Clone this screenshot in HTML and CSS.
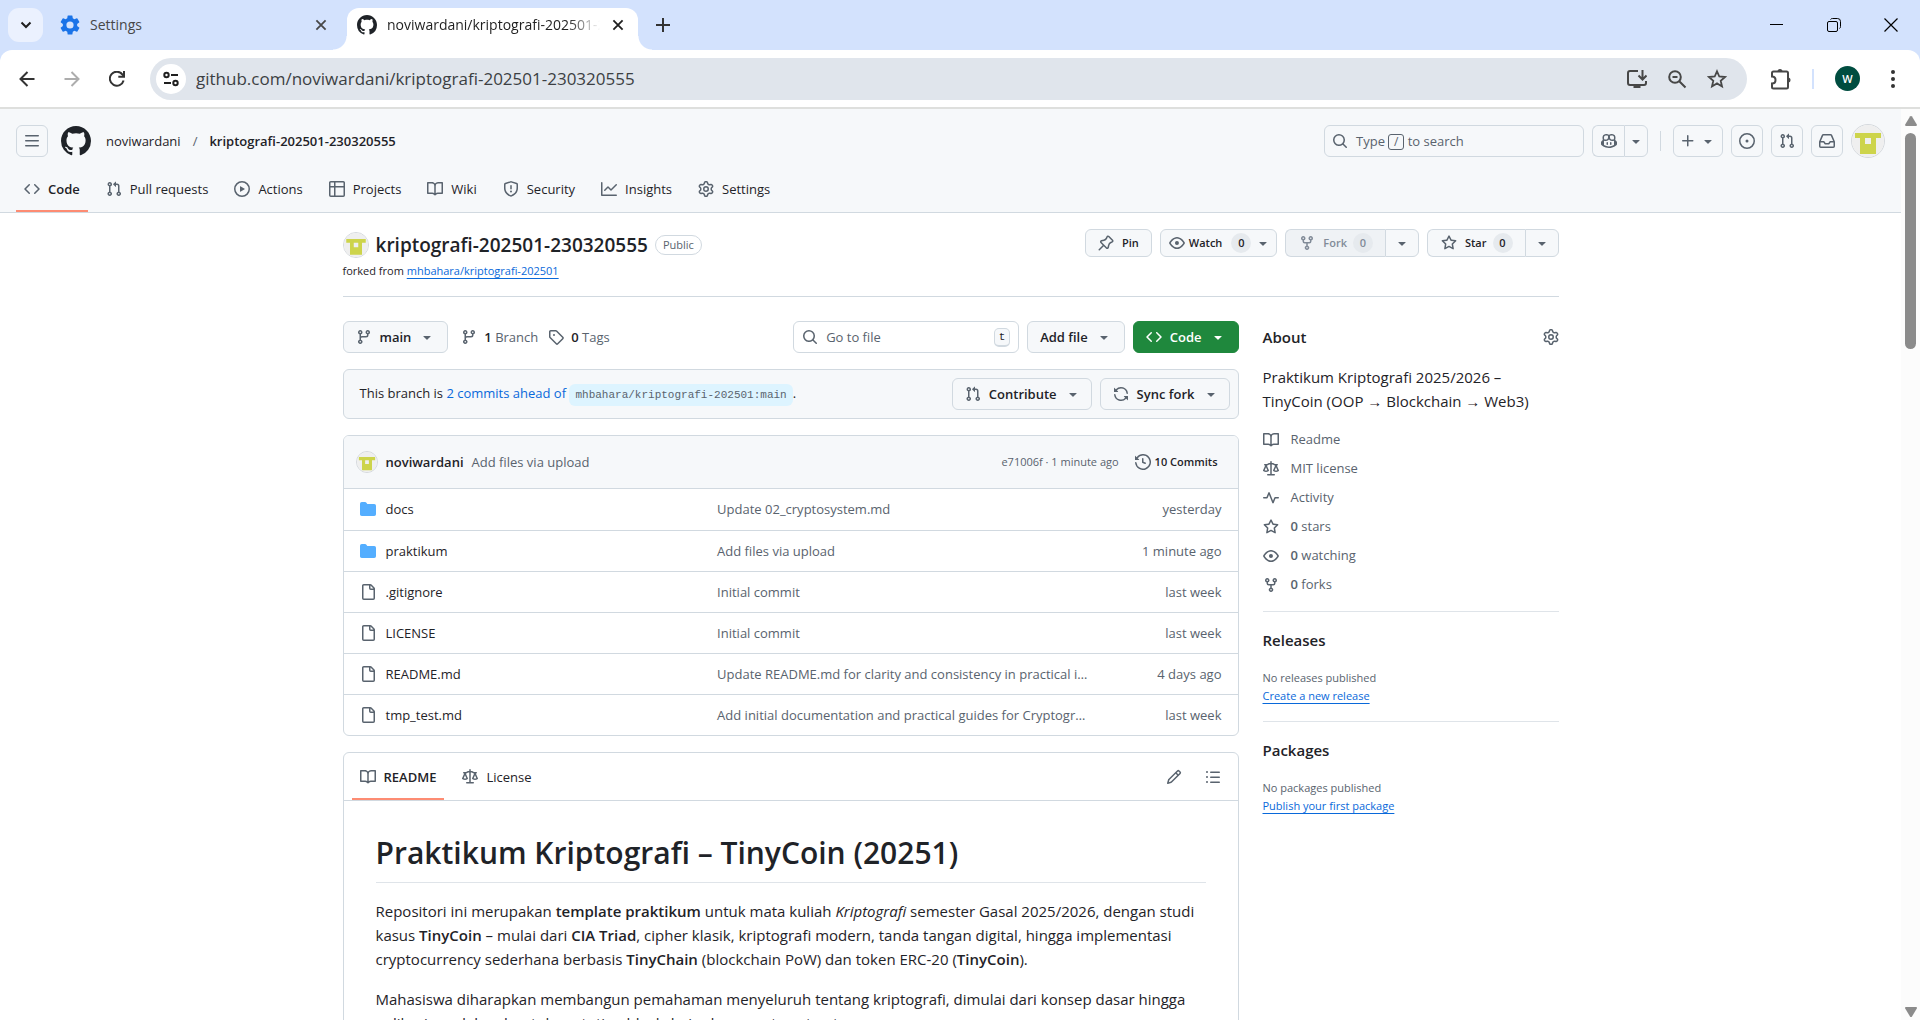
FILE: index.html
```html
<!DOCTYPE html>
<html lang="en">
<head>
<meta charset="utf-8">
<meta name="viewport" content="width=device-width, initial-scale=1">
<title>noviwardani/kriptografi-202501-230320555</title>
<link rel="stylesheet" href="styles.css">
</head>
<body>
<svg class="sprite" aria-hidden="true">
  <symbol id="three-bars" viewBox="0 0 16 16"><path d="M1 2.75A.75.75 0 0 1 1.75 2h12.5a.75.75 0 0 1 0 1.5H1.75A.75.75 0 0 1 1 2.75Zm0 5A.75.75 0 0 1 1.75 7h12.5a.75.75 0 0 1 0 1.5H1.75A.75.75 0 0 1 1 7.75ZM1.75 12h12.5a.75.75 0 0 1 0 1.5H1.75a.75.75 0 0 1 0-1.5Z"/></symbol>
  <symbol id="mark" viewBox="0 0 16 16"><path d="M8 0c4.42 0 8 3.58 8 8a8.013 8.013 0 0 1-5.45 7.59c-.4.08-.55-.17-.55-.38 0-.27.01-1.13.01-2.2 0-.75-.25-1.23-.54-1.48 1.78-.2 3.65-.88 3.65-3.95 0-.88-.31-1.59-.82-2.15.08-.2.36-1.02-.08-2.12 0 0-.67-.22-2.2.82-.64-.18-1.32-.27-2-.27-.68 0-1.36.09-2 .27-1.53-1.03-2.2-.82-2.2-.82-.44 1.1-.16 1.92-.08 2.12-.51.56-.82 1.28-.82 2.15 0 3.06 1.86 3.75 3.64 3.95-.23.2-.44.55-.51 1.07-.46.21-1.61.55-2.33-.66-.15-.24-.6-.83-1.23-.82-.67.01-.27.38.01.53.34.19.73.9.82 1.13.16.45.68 1.31 2.69.94 0 .67.01 1.3.01 1.49 0 .21-.15.45-.55.38A7.995 7.995 0 0 1 0 8c0-4.42 3.58-8 8-8Z"/></symbol>
  <symbol id="code" viewBox="0 0 16 16"><path d="m11.28 3.22 4.25 4.25a.75.75 0 0 1 0 1.06l-4.25 4.25a.749.749 0 0 1-1.275-.326.749.749 0 0 1 .215-.734L13.94 8l-3.72-3.72a.749.749 0 0 1 .326-1.275.749.749 0 0 1 .734.215Zm-6.56 0a.751.751 0 0 1 1.042.018.751.751 0 0 1 .018 1.042L2.06 8l3.72 3.72a.749.749 0 0 1-.326 1.275.749.749 0 0 1-.734-.215L.47 8.53a.75.75 0 0 1 0-1.06Z"/></symbol>
  <symbol id="pull" viewBox="0 0 16 16"><path d="M1.5 3.25a2.25 2.25 0 1 1 3 2.122v5.256a2.251 2.251 0 1 1-1.5 0V5.372A2.25 2.25 0 0 1 1.5 3.25Zm5.677-.177L9.573.677A.25.25 0 0 1 10 .854V2.5h1A2.5 2.5 0 0 1 13.5 5v5.628a2.251 2.251 0 1 1-1.5 0V5a1 1 0 0 0-1-1h-1v1.646a.25.25 0 0 1-.427.177L7.177 3.427a.25.25 0 0 1 0-.354ZM3.75 2.5a.75.75 0 1 0 0 1.5.75.75 0 0 0 0-1.5Zm0 9.5a.75.75 0 1 0 0 1.5.75.75 0 0 0 0-1.5Zm8.25.75a.75.75 0 1 0 1.5 0 .75.75 0 0 0-1.5 0Z"/></symbol>
  <symbol id="play" viewBox="0 0 16 16"><path d="M8 0a8 8 0 1 1 0 16A8 8 0 0 1 8 0ZM1.5 8a6.5 6.5 0 1 0 13 0 6.5 6.5 0 0 0-13 0Zm4.879-2.773 4.264 2.559a.25.25 0 0 1 0 .428l-4.264 2.559A.25.25 0 0 1 6 10.559V5.442a.25.25 0 0 1 .379-.215Z"/></symbol>
  <symbol id="table" viewBox="0 0 16 16"><path d="M0 1.75C0 .784.784 0 1.75 0h12.5C15.216 0 16 .784 16 1.75v12.5A1.75 1.75 0 0 1 14.25 16H1.75A1.75 1.75 0 0 1 0 14.25ZM6.5 6.5v8h7.75a.25.25 0 0 0 .25-.25V6.5Zm8-1.5V1.75a.25.25 0 0 0-.25-.25H6.5V5Zm-13 1.5v7.75c0 .138.112.25.25.25H5v-8ZM5 5V1.5H1.75a.25.25 0 0 0-.25.25V5Z"/></symbol>
  <symbol id="book" viewBox="0 0 16 16"><path d="M0 1.75A.75.75 0 0 1 .75 1h4.253c1.227 0 2.317.59 3 1.501A3.743 3.743 0 0 1 11.006 1h4.245a.75.75 0 0 1 .75.75v10.5a.75.75 0 0 1-.75.75h-4.507a2.25 2.25 0 0 0-1.591.659l-.622.621a.75.75 0 0 1-1.06 0l-.622-.621A2.25 2.25 0 0 0 5.258 13H.75a.75.75 0 0 1-.75-.75Zm7.251 10.324.004-5.073-.002-2.253A2.25 2.25 0 0 0 5.003 2.5H1.5v9h3.757a3.75 3.75 0 0 1 1.994.574ZM8.755 4.75l-.004 7.322a3.752 3.752 0 0 1 1.992-.572H14.5v-9h-3.495a2.25 2.25 0 0 0-2.25 2.25Z"/></symbol>
  <symbol id="shield" viewBox="0 0 16 16"><path d="M7.467.133a1.748 1.748 0 0 1 1.066 0l5.25 1.68A1.75 1.75 0 0 1 15 3.48V7c0 1.566-.32 3.182-1.303 4.682-.983 1.498-2.585 2.813-5.032 3.855a1.697 1.697 0 0 1-1.33 0c-2.447-1.042-4.049-2.357-5.032-3.855C1.32 10.182 1 8.566 1 7V3.48a1.75 1.75 0 0 1 1.217-1.667Zm.61 1.429a.25.25 0 0 0-.153 0l-5.25 1.68a.25.25 0 0 0-.174.238V7c0 1.358.275 2.666 1.057 3.86.784 1.194 2.121 2.34 4.366 3.297a.196.196 0 0 0 .154 0c2.245-.956 3.582-2.104 4.366-3.298C13.225 9.666 13.5 8.36 13.5 7V3.48a.251.251 0 0 0-.174-.237l-5.25-1.68ZM8.75 4.75v3a.75.75 0 0 1-1.5 0v-3a.75.75 0 0 1 1.5 0ZM9 10.5a1 1 0 1 1-2 0 1 1 0 0 1 2 0Z"/></symbol>
  <symbol id="graph" viewBox="0 0 16 16"><path d="M1.5 1.75V13.5h13.75a.75.75 0 0 1 0 1.5H.75a.75.75 0 0 1-.75-.75V1.75a.75.75 0 0 1 1.5 0Zm14.28 2.53-5.25 5.25a.75.75 0 0 1-1.06 0L7 7.06 4.28 9.78a.751.751 0 0 1-1.042-.018.751.751 0 0 1-.018-1.042l3.25-3.25a.75.75 0 0 1 1.06 0L10 7.94l4.72-4.72a.751.751 0 0 1 1.042.018.751.751 0 0 1 .018 1.042Z"/></symbol>
  <symbol id="gear" viewBox="0 0 16 16"><path d="M8 0a8.2 8.2 0 0 1 .701.031C9.444.095 9.99.645 10.16 1.29l.288 1.107c.018.066.079.158.212.224.231.114.454.243.668.386.123.082.233.09.299.071l1.103-.303c.644-.176 1.392.021 1.82.63.27.385.506.792.704 1.218.315.675.111 1.422-.364 1.891l-.814.806c-.049.048-.098.147-.088.294.016.257.016.515 0 .772-.01.147.038.246.088.294l.814.806c.475.469.679 1.216.364 1.891a7.977 7.977 0 0 1-.704 1.217c-.428.61-1.176.807-1.82.63l-1.102-.302c-.067-.019-.177-.011-.3.071a5.909 5.909 0 0 1-.668.386c-.133.066-.194.158-.211.224l-.29 1.106c-.168.646-.715 1.196-1.458 1.26a8.006 8.006 0 0 1-1.402 0c-.743-.064-1.289-.614-1.458-1.26l-.289-1.106c-.018-.066-.079-.158-.212-.224a5.738 5.738 0 0 1-.668-.386c-.123-.082-.233-.09-.299-.071l-1.103.303c-.644.176-1.392-.021-1.82-.63a8.12 8.12 0 0 1-.704-1.218c-.315-.675-.111-1.422.363-1.891l.815-.806c.05-.048.098-.147.088-.294a6.214 6.214 0 0 1 0-.772c.01-.147-.038-.246-.088-.294l-.815-.806C.635 6.045.431 5.298.746 4.623a7.92 7.92 0 0 1 .704-1.217c.428-.61 1.176-.807 1.82-.63l1.102.302c.067.019.177.011.3-.071.214-.143.437-.272.668-.386.133-.066.194-.158.211-.224l.29-1.106C6.009.645 6.556.095 7.299.03 7.53.01 7.764 0 8 0Zm-.571 1.525c-.036.003-.108.036-.137.146l-.289 1.105c-.147.561-.549.967-.998 1.189-.173.086-.34.183-.5.29-.417.278-.97.423-1.529.27l-1.103-.303c-.109-.03-.175.016-.195.045-.22.312-.412.644-.573.99-.014.031-.021.11.059.19l.815.806c.411.406.562.957.53 1.456a4.709 4.709 0 0 0 0 .582c.032.499-.119 1.05-.53 1.456l-.815.806c-.081.08-.073.159-.059.19.162.346.353.677.573.989.02.03.085.076.195.046l1.102-.303c.56-.153 1.113-.008 1.53.27.161.107.328.204.501.29.447.222.85.629.997 1.189l.289 1.105c.029.109.101.143.137.146a6.6 6.6 0 0 0 1.142 0c.036-.003.108-.036.137-.146l.289-1.105c.147-.561.549-.967.998-1.189.173-.086.34-.183.5-.29.417-.278.97-.423 1.529-.27l1.103.303c.109.029.175-.016.195-.045.22-.313.411-.644.573-.99.014-.031.021-.11-.059-.19l-.815-.806c-.411-.406-.562-.957-.53-1.456a4.709 4.709 0 0 0 0-.582c-.032-.499.119-1.05.53-1.456l.815-.806c.081-.08.073-.159.059-.19a6.464 6.464 0 0 0-.573-.989c-.02-.03-.085-.076-.195-.046l-1.102.303c-.56.153-1.113.008-1.53-.27a4.44 4.44 0 0 0-.501-.29c-.447-.222-.85-.629-.997-1.189l-.289-1.105c-.029-.11-.101-.143-.137-.146a6.6 6.6 0 0 0-1.142 0ZM11 8a3 3 0 1 1-6 0 3 3 0 0 1 6 0ZM9.5 8a1.5 1.5 0 1 0-3.001.001A1.5 1.5 0 0 0 9.5 8Z"/></symbol>
  <symbol id="search" viewBox="0 0 16 16"><path d="M10.68 11.74a6 6 0 0 1-7.922-8.982 6 6 0 0 1 8.982 7.922l3.04 3.04a.749.749 0 0 1-.326 1.275.749.749 0 0 1-.734-.215ZM11.5 7a4.499 4.499 0 1 0-8.997 0A4.499 4.499 0 0 0 11.5 7Z"/></symbol>
  <symbol id="copilot" viewBox="0 0 16 16"><path d="M7.998 15.035c-4.562 0-7.873-2.914-7.998-3.749V9.338c.085-.628.677-1.686 1.588-2.065.013-.07.024-.143.036-.218.029-.183.06-.384.126-.612-.201-.508-.254-1.084-.254-1.656 0-.87.128-1.769.693-2.484.579-.733 1.494-1.124 2.724-1.261 1.206-.134 2.262.034 2.944.765.05.053.096.108.139.165.044-.057.094-.112.143-.165.682-.731 1.738-.899 2.944-.765 1.23.137 2.145.528 2.724 1.261.566.715.693 1.614.693 2.484 0 .572-.053 1.148-.254 1.656.066.228.098.429.126.612.012.076.024.148.037.218.924.385 1.522 1.471 1.591 2.095v1.872c0 .766-3.351 3.795-8.002 3.795Zm0-1.485c2.28 0 4.584-1.11 5.002-1.433V7.862l-.023-.116c-.49.21-1.075.291-1.727.291-1.146 0-2.059-.327-2.71-.991A3.222 3.222 0 0 1 8 6.303a3.24 3.24 0 0 1-.544.743c-.65.664-1.563.991-2.71.991-.652 0-1.236-.081-1.727-.291l-.023.116v4.255c.419.323 2.722 1.433 5.002 1.433ZM6.762 2.83c-.193-.206-.637-.413-1.682-.297-1.019.113-1.479.404-1.713.7-.247.312-.369.789-.369 1.554 0 .793.129 1.171.308 1.371.162.181.519.379 1.442.379.853 0 1.339-.235 1.638-.54.315-.322.527-.827.617-1.553.117-.935-.037-1.395-.241-1.614Zm4.155-.297c-1.044-.116-1.488.091-1.681.297-.204.219-.359.679-.242 1.614.091.726.303 1.231.618 1.553.299.305.784.54 1.638.54.922 0 1.28-.198 1.442-.379.179-.2.308-.578.308-1.371 0-.765-.123-1.242-.37-1.554-.233-.296-.693-.587-1.713-.7Z"/><path d="M6.25 9.037a.75.75 0 0 1 .75.75v1.501a.75.75 0 0 1-1.5 0V9.787a.75.75 0 0 1 .75-.75Zm4.25.75v1.501a.75.75 0 0 1-1.5 0V9.787a.75.75 0 0 1 1.5 0Z"/></symbol>
  <symbol id="caret" viewBox="0 0 16 16"><path d="m4.427 7.427 3.396 3.396a.25.25 0 0 0 .354 0l3.396-3.396A.25.25 0 0 0 11.396 7H4.604a.25.25 0 0 0-.177.427Z"/></symbol>
  <symbol id="plus" viewBox="0 0 16 16"><path d="M7.75 2a.75.75 0 0 1 .75.75V7h4.25a.75.75 0 0 1 0 1.5H8.5v4.25a.75.75 0 0 1-1.5 0V8.5H2.75a.75.75 0 0 1 0-1.5H7V2.75A.75.75 0 0 1 7.75 2Z"/></symbol>
  <symbol id="issue" viewBox="0 0 16 16"><path d="M8 9.5a1.5 1.5 0 1 0 0-3 1.5 1.5 0 0 0 0 3Z"/><path d="M8 0a8 8 0 1 1 0 16A8 8 0 0 1 8 0ZM1.5 8a6.5 6.5 0 1 0 13 0 6.5 6.5 0 0 0-13 0Z"/></symbol>
  <symbol id="inbox" viewBox="0 0 16 16"><path d="M2.8 2.06A1.75 1.75 0 0 1 4.41 1h7.18c.7 0 1.333.417 1.61 1.06l2.74 6.395c.04.093.06.194.06.295v4.5A1.75 1.75 0 0 1 14.25 15H1.75A1.75 1.75 0 0 1 0 13.25v-4.5c0-.101.02-.202.06-.295Zm1.61.44a.25.25 0 0 0-.23.152L1.887 8H4.75a.75.75 0 0 1 .6.3L6.625 10h2.75l1.275-1.7a.75.75 0 0 1 .6-.3h2.863L11.82 2.652a.25.25 0 0 0-.23-.152Zm10.09 7h-2.875l-1.275 1.7a.75.75 0 0 1-.6.3h-3.5a.75.75 0 0 1-.6-.3L4.375 9.5H1.5v3.75c0 .138.112.25.25.25h12.5a.25.25 0 0 0 .25-.25Z"/></symbol>
  <symbol id="pin" viewBox="0 0 16 16"><path d="m11.294.984 3.722 3.722a1.75 1.75 0 0 1-.504 2.826l-1.327.613a3.089 3.089 0 0 0-1.707 2.084l-.584 2.454c-.317 1.332-1.972 1.8-2.94.832L5.75 11.311 1.78 15.28a.749.749 0 1 1-1.06-1.06l3.969-3.97-2.204-2.204c-.968-.968-.5-2.623.832-2.94l2.454-.584a3.08 3.08 0 0 0 2.084-1.707l.613-1.327a1.75 1.75 0 0 1 2.826-.504ZM6.283 9.723l2.732 2.731a.25.25 0 0 0 .42-.119l.584-2.454a4.586 4.586 0 0 1 2.537-3.098l1.328-.613a.25.25 0 0 0 .072-.404l-3.722-3.722a.25.25 0 0 0-.404.072l-.613 1.328a4.584 4.584 0 0 1-3.098 2.537l-2.454.584a.25.25 0 0 0-.119.42l2.731 2.732Z"/></symbol>
  <symbol id="eye" viewBox="0 0 16 16"><path d="M8 2c1.981 0 3.671.992 4.933 2.078 1.27 1.091 2.187 2.345 2.637 3.023a1.62 1.62 0 0 1 0 1.798c-.45.678-1.367 1.932-2.637 3.023C11.67 13.008 9.981 14 8 14c-1.981 0-3.671-.992-4.933-2.078C1.797 10.83.88 9.576.43 8.898a1.62 1.62 0 0 1 0-1.798c.45-.677 1.367-1.931 2.637-3.022C4.33 2.992 6.019 2 8 2ZM1.679 7.932a.12.12 0 0 0 0 .136c.411.622 1.241 1.75 2.366 2.717C5.176 11.758 6.527 12.5 8 12.5c1.473 0 2.825-.742 3.955-1.715 1.124-.967 1.954-2.096 2.366-2.717a.12.12 0 0 0 0-.136c-.412-.621-1.242-1.75-2.366-2.717C10.824 4.242 9.473 3.5 8 3.5c-1.473 0-2.825.742-3.955 1.715-1.124.967-1.954 2.096-2.366 2.717ZM8 10a2 2 0 1 1-.001-3.999A2 2 0 0 1 8 10Z"/></symbol>
  <symbol id="fork" viewBox="0 0 16 16"><path d="M5 5.372v.878c0 .414.336.75.75.75h4.5a.75.75 0 0 0 .75-.75v-.878a2.25 2.25 0 1 1 1.5 0v.878a2.25 2.25 0 0 1-2.25 2.25h-1.5v2.128a2.251 2.251 0 1 1-1.5 0V8.5h-1.5A2.25 2.25 0 0 1 3.5 6.25v-.878a2.25 2.25 0 1 1 1.5 0ZM5 3.25a.75.75 0 1 0-1.5 0 .75.75 0 0 0 1.5 0Zm6.75.75a.75.75 0 1 0 0-1.5.75.75 0 0 0 0 1.5Zm-3 8.75a.75.75 0 1 0-1.5 0 .75.75 0 0 0 1.5 0Z"/></symbol>
  <symbol id="star" viewBox="0 0 16 16"><path d="M8 .25a.75.75 0 0 1 .673.418l1.882 3.815 4.21.612a.75.75 0 0 1 .416 1.279l-3.046 2.97.719 4.192a.751.751 0 0 1-1.088.791L8 12.347l-3.766 1.98a.75.75 0 0 1-1.088-.79l.72-4.194L.818 6.374a.75.75 0 0 1 .416-1.28l4.21-.611L7.327.668A.75.75 0 0 1 8 .25Zm0 2.445L6.615 5.5a.75.75 0 0 1-.564.41l-3.097.45 2.24 2.184a.75.75 0 0 1 .216.664l-.528 3.084 2.769-1.456a.75.75 0 0 1 .698 0l2.77 1.456-.53-3.084a.75.75 0 0 1 .216-.664l2.24-2.183-3.096-.45a.75.75 0 0 1-.564-.41L8 2.694Z"/></symbol>
  <symbol id="branch" viewBox="0 0 16 16"><path d="M9.5 3.25a2.25 2.25 0 1 1 3 2.122V6A2.5 2.5 0 0 1 10 8.5H6a1 1 0 0 0-1 1v1.128a2.251 2.251 0 1 1-1.5 0V5.372a2.25 2.25 0 1 1 1.5 0v1.836A2.493 2.493 0 0 1 6 7h4a1 1 0 0 0 1-1v-.628A2.25 2.25 0 0 1 9.5 3.25Zm-6 0a.75.75 0 1 0 1.5 0 .75.75 0 0 0-1.5 0Zm8.25-.75a.75.75 0 1 0 0 1.5.75.75 0 0 0 0-1.5ZM4.25 12a.75.75 0 1 0 0 1.5.75.75 0 0 0 0-1.5Z"/></symbol>
  <symbol id="tag" viewBox="0 0 16 16"><path d="M1 7.775V2.75C1 1.784 1.784 1 2.75 1h5.025c.464 0 .91.184 1.238.513l6.25 6.25a1.75 1.75 0 0 1 0 2.474l-5.026 5.026a1.75 1.75 0 0 1-2.474 0l-6.25-6.25A1.752 1.752 0 0 1 1 7.775Zm1.5 0c0 .066.026.13.073.177l6.25 6.25a.25.25 0 0 0 .354 0l5.025-5.025a.25.25 0 0 0 0-.354l-6.25-6.25a.25.25 0 0 0-.177-.073H2.75a.25.25 0 0 0-.25.25ZM6 5a1 1 0 1 1 0 2 1 1 0 0 1 0-2Z"/></symbol>
  <symbol id="sync" viewBox="0 0 16 16"><path d="M1.705 8.005a.75.75 0 0 1 .834.656 5.5 5.5 0 0 0 9.592 2.97l-1.204-1.204a.25.25 0 0 1 .177-.427h3.646a.25.25 0 0 1 .25.25v3.646a.25.25 0 0 1-.427.177l-1.38-1.38A7.002 7.002 0 0 1 1.05 8.84a.75.75 0 0 1 .656-.834ZM8 2.5a5.487 5.487 0 0 0-4.131 1.869l1.204 1.204A.25.25 0 0 1 4.896 6H1.25A.25.25 0 0 1 1 5.75V2.104a.25.25 0 0 1 .427-.177l1.38 1.38A7.002 7.002 0 0 1 14.95 7.16a.75.75 0 0 1-1.49.178A5.5 5.5 0 0 0 8 2.5Z"/></symbol>
  <symbol id="history" viewBox="0 0 16 16"><path d="m.427 1.927 1.215 1.215a8.002 8.002 0 1 1-1.6 5.685.75.75 0 1 1 1.493-.154 6.5 6.5 0 1 0 1.18-4.458l1.358 1.358A.25.25 0 0 1 3.896 6H.25A.25.25 0 0 1 0 5.75V2.104a.25.25 0 0 1 .427-.177ZM7.75 4a.75.75 0 0 1 .75.75v2.992l2.028.812a.75.75 0 0 1-.557 1.392l-2.5-1A.751.751 0 0 1 7 8.25v-3.5A.75.75 0 0 1 7.75 4Z"/></symbol>
  <symbol id="folder" viewBox="0 0 16 16"><path d="M1.75 1A1.75 1.75 0 0 0 0 2.75v10.5C0 14.216.784 15 1.75 15h12.5A1.75 1.75 0 0 0 16 13.25v-8.5A1.75 1.75 0 0 0 14.25 3H7.5a.25.25 0 0 1-.2-.1l-.9-1.2C6.07 1.26 5.55 1 5 1H1.75Z"/></symbol>
  <symbol id="file" viewBox="0 0 16 16"><path d="M2 1.75C2 .784 2.784 0 3.75 0h6.586c.464 0 .909.184 1.237.513l2.914 2.914c.329.328.513.773.513 1.237v9.586A1.75 1.75 0 0 1 13.25 16h-9.5A1.75 1.75 0 0 1 2 14.25Zm1.75-.25a.25.25 0 0 0-.25.25v12.5c0 .138.112.25.25.25h9.5a.25.25 0 0 0 .25-.25V6h-2.75A1.75 1.75 0 0 1 9 4.25V1.5Zm6.75.062V4.25c0 .138.112.25.25.25h2.688l-.011-.013-2.914-2.914-.013-.011Z"/></symbol>
  <symbol id="law" viewBox="0 0 16 16"><path d="M8.75.75V2h.985c.304 0 .603.08.867.231l1.29.736c.038.022.08.033.124.033h2.234a.75.75 0 0 1 0 1.5h-.427l2.111 4.692a.75.75 0 0 1-.154.838l-.53-.53.529.531-.001.002-.002.002-.006.006-.006.005-.01.01-.045.04c-.21.176-.441.327-.686.45C14.556 10.78 13.88 11 13 11a4.498 4.498 0 0 1-2.023-.454 3.544 3.544 0 0 1-.686-.45l-.045-.04-.016-.015-.006-.006-.004-.004v-.001a.75.75 0 0 1-.154-.838L12.178 4.5h-.162c-.305 0-.604-.079-.868-.231l-1.29-.736a.245.245 0 0 0-.124-.033H8.75V13h2.5a.75.75 0 0 1 0 1.5h-6.5a.75.75 0 0 1 0-1.5h2.5V3.5h-.984a.245.245 0 0 0-.124.033l-1.289.737c-.265.15-.564.23-.869.23h-.162l2.112 4.692a.75.75 0 0 1-.154.838l-.53-.53.529.531-.001.002-.002.002-.006.006-.016.015-.045.04c-.21.176-.441.327-.686.45C4.556 10.78 3.88 11 3 11a4.498 4.498 0 0 1-2.023-.454 3.544 3.544 0 0 1-.686-.45l-.045-.04-.016-.015-.006-.006-.004-.004v-.001a.75.75 0 0 1-.154-.838L2.178 4.5H1.75a.75.75 0 0 1 0-1.5h2.234a.249.249 0 0 0 .125-.033l1.288-.737c.265-.15.564-.23.869-.23h.984V.75a.75.75 0 0 1 1.5 0Zm2.945 8.477c.285.135.718.273 1.305.273s1.02-.138 1.305-.273L13 6.327Zm-10 0c.285.135.718.273 1.305.273s1.02-.138 1.305-.273L3 6.327Z"/></symbol>
  <symbol id="pulse" viewBox="0 0 16 16"><path d="M6 2c.306 0 .582.187.696.471L10 10.731l1.304-3.26A.751.751 0 0 1 12 7h3.25a.75.75 0 0 1 0 1.5h-2.742l-1.812 4.528a.751.751 0 0 1-1.392 0L6 4.77 4.696 8.03A.75.75 0 0 1 4 8.5H.75a.75.75 0 0 1 0-1.5h2.742l1.812-4.529A.751.751 0 0 1 6 2Z"/></symbol>
  <symbol id="pencil" viewBox="0 0 16 16"><path d="M11.013 1.427a1.75 1.75 0 0 1 2.474 0l1.086 1.086a1.75 1.75 0 0 1 0 2.474l-8.61 8.61c-.21.21-.47.364-.756.445l-3.251.93a.75.75 0 0 1-.927-.928l.929-3.25c.081-.286.235-.547.445-.758l8.61-8.61Zm.176 4.823L9.75 4.81l-6.286 6.287a.253.253 0 0 0-.064.108l-.558 1.953 1.953-.558a.253.253 0 0 0 .108-.064Zm1.238-3.763a.25.25 0 0 0-.354 0L10.811 3.75l1.439 1.44 1.263-1.263a.25.25 0 0 0 0-.354Z"/></symbol>
  <symbol id="list" viewBox="0 0 16 16"><path d="M5.75 2.5h8.5a.75.75 0 0 1 0 1.5h-8.5a.75.75 0 0 1 0-1.5Zm0 5h8.5a.75.75 0 0 1 0 1.5h-8.5a.75.75 0 0 1 0-1.5Zm0 5h8.5a.75.75 0 0 1 0 1.5h-8.5a.75.75 0 0 1 0-1.5ZM2 14a1 1 0 1 1 0-2 1 1 0 0 1 0 2Zm1-6a1 1 0 1 1-2 0 1 1 0 0 1 2 0ZM2 4a1 1 0 1 1 0-2 1 1 0 0 1 0 2Z"/></symbol>
  <symbol id="identicon" viewBox="0 0 32 32"><path fill="#efefef" d="M0 0h32v32H0z"/><path fill="#cdd44b" d="M3 8h26v5h-5v16H8V13H3z"/><path fill="#efefef" d="M13 13h6v6h-6z"/></symbol>
  <symbol id="x" viewBox="0 0 16 16"><path fill="none" stroke="currentColor" stroke-width="1.8" d="m3.4 3.4 9.2 9.2m0-9.2-9.2 9.2"/></symbol>
</svg>

<header class="browser">
  <div class="tabstrip">
    <button class="tab-search" aria-label="Search tabs"><svg width="16" height="16" viewBox="0 0 16 16" fill="none" stroke="#1f1f1f" stroke-width="2"><path d="m3.5 5.5 4.5 4.5 4.5-4.5"/></svg></button>
    <div class="tab">
      <svg width="20" height="20" viewBox="2 2 20 20"><path fill="#1a73e8" d="M19.14 12.94a7.5 7.5 0 0 0 0-1.88l2.03-1.58a.5.5 0 0 0 .12-.61l-1.92-3.32a.5.5 0 0 0-.59-.22l-2.39.96a7 7 0 0 0-1.62-.94l-.36-2.54A.48.48 0 0 0 13.93 2.400h-3.84a.48.48 0 0 0-.48.410l-.36 2.540a7.200 7.200 0 0 0-1.620.940l-2.390-.960a.5.5 0 0 0-.590.220L2.740 8.870a.48.48 0 0 0 .120.610l2.030 1.580a7.500 7.500 0 0 0 0 1.880l-2.030 1.580a.5.5 0 0 0-.120.610l1.920 3.320c.120.220.370.290.590.220l2.390-.960c.5.380 1.030.7 1.620.940l.360 2.540c.050.240.240.410.480.410h3.840c.240 0 .440-.170.470-.410l.360-2.540a7 7 0 0 0 1.620-.940l2.390.960a.5.5 0 0 0 .590-.220l1.920-3.320a.5.5 0 0 0-.120-.610ZM12 15.600A3.600 3.600 0 1 1 12 8.400a3.600 3.600 0 0 1 0 7.200Z"/></svg>
      <span class="tab-title">Settings</span>
      <button class="plain" aria-label="Close tab"><svg width="16" height="16"><use href="#x"/></svg></button>
    </div>
    <div class="tab active">
      <svg class="ink" width="20" height="20"><use href="#mark"/></svg>
      <span class="tab-title">noviwardani/kriptografi-202501-230320555</span>
      <button class="plain" aria-label="Close tab"><svg width="16" height="16"><use href="#x"/></svg></button>
    </div>
    <button class="plain new-tab" aria-label="New tab"><svg width="16" height="16" viewBox="0 0 16 16" stroke="#333" stroke-width="2"><path d="M8 1v14M1 8h14"/></svg></button>
    <div class="window-controls">
      <button class="plain" aria-label="Minimize"><svg width="14" height="14" viewBox="0 0 14 14" stroke="#000"><path d="M0 6.500h13"/></svg></button>
      <button class="plain" aria-label="Restore"><svg width="14" height="14" viewBox="0 0 14 14" fill="none" stroke="#000"><rect x=".5" y="3.500" width="10" height="10" rx="1.500"/><path d="M3.500 1.500c.5-.7 1-1 2-1h5a3 3 0 0 1 3 3v5c0 1-.3 1.700-1 2"/></svg></button>
      <button class="plain" aria-label="Close"><svg width="14" height="14" viewBox="0 0 14 14" stroke="#000" stroke-width="1.200"><path d="m.5.5 13 13m0-13-13 13"/></svg></button>
    </div>
  </div>
  <div class="toolbar">
    <div class="nav-buttons">
      <button class="plain" aria-label="Back"><svg width="16" height="16" viewBox="0 0 16 16" fill="none" stroke="#333" stroke-width="2"><path d="M15.500 8H2M8.500 1 1.500 8l7 7"/></svg></button>
      <button class="plain" aria-label="Forward"><svg width="16" height="16" viewBox="0 0 16 16" fill="none" stroke="#adadad" stroke-width="2"><path d="M.5 8H14M7.500 1l7 7-7 7"/></svg></button>
      <button class="plain" aria-label="Reload"><svg width="16" height="16" viewBox="0 0 16 16" fill="none" stroke="#333" stroke-width="2"><path d="M14.600 9.500A7 7 0 1 1 13.500 3.600L15 5.200"/><path d="M15 0v5.800H9.300"/></svg></button>
    </div>
    <div class="omnibox">
      <button class="site-info" aria-label="View site information"><svg width="16" height="16" viewBox="0 0 16 16" fill="none" stroke="#1f1f1f" stroke-width="2"><circle cx="3.500" cy="4" r="2.200"/><path d="M8 4h7M1 12h7"/><circle cx="12.500" cy="12" r="2.200"/></svg></button>
      <input class="url" type="text" aria-label="Address and search bar" value="github.com/noviwardani/kriptografi-202501-230320555">
      <button class="plain" aria-label="Install"><svg width="20" height="20" viewBox="0 0 20 20" fill="none" stroke="#474747" stroke-width="2"><path d="M11 2H3a2 2 0 0 0-2 2v10a2 2 0 0 0 2 2h14a2 2 0 0 0 2-2v-2M15.500 1v9M11.500 6.500l4 4 4-4"/><path stroke-width="3" d="M6.500 17.500h7"/></svg></button>
      <button class="plain" aria-label="Zoom"><svg width="20" height="20" viewBox="0 0 20 20" fill="none" stroke="#474747" stroke-width="2"><circle cx="8" cy="8" r="5.800"/><path d="m12 12 6.500 6.500M5.500 8h5"/></svg></button>
      <button class="plain" aria-label="Bookmark"><svg width="20" height="20" viewBox="0 0 20 20" fill="none" stroke="#474747" stroke-width="1.800"><path d="m10 2.300 2.300 5.200 5.700.500-4.300 3.800 1.300 5.600-5-3-5 3 1.300-5.600L2 8l5.700-.500Z"/></svg></button>
    </div>
    <div class="toolbar-end">
      <button class="plain" aria-label="Extensions"><svg width="22" height="22" viewBox="0 0 22 22"><path fill="none" stroke="#474747" stroke-width="2" d="M2 5a1.500 1.500 0 0 1 1.500-1.500h13A1.500 1.500 0 0 1 18 5v14a1.500 1.500 0 0 1-1.500 1.500h-13A1.500 1.500 0 0 1 2 19v-3.500c2.500 0 3.500-1.500 3.500-3.500S4.500 8.500 2 8.500Z"/><path fill="#474747" d="M7.500 3.500a2.500 2.500 0 0 1 5 0zM18 9.500a2.500 2.500 0 0 1 0 5z"/></svg></button>
      <span class="toolbar-rule"></span>
      <button class="profile" aria-label="Profile">W</button>
      <button class="plain" aria-label="Menu"><svg width="18" height="18" viewBox="0 0 18 18" fill="#333"><circle cx="9" cy="2" r="2"/><circle cx="9" cy="9" r="2"/><circle cx="9" cy="16" r="2"/></svg></button>
    </div>
  </div>
</header>

<div class="viewport">
  <div class="page">
    <header class="app-header">
      <div class="app-bar">
        <button class="icon-btn" aria-label="Open menu"><svg class="icon"><use href="#three-bars"/></svg></button>
        <a class="home" href="#" aria-label="Homepage"><svg class="ink" width="30" height="30"><use href="#mark"/></svg></a>
        <nav class="crumbs" aria-label="Breadcrumb"><a href="#">noviwardani</a><span>/</span><a class="strong" href="#">kriptografi-202501-230320555</a></nav>
        <button class="global-search"><svg class="icon"><use href="#search"/></svg><span>Type <kbd>/</kbd> to search</span></button>
        <div class="split">
          <button class="icon-btn" aria-label="Copilot"><svg class="icon"><use href="#copilot"/></svg></button>
          <button class="icon-btn narrow" aria-label="Copilot menu"><svg class="icon"><use href="#caret"/></svg></button>
        </div>
        <span class="bar-rule"></span>
        <button class="icon-btn create" aria-label="Create new"><svg class="icon"><use href="#plus"/></svg><svg class="icon"><use href="#caret"/></svg></button>
        <button class="icon-btn" aria-label="Issues"><svg class="icon"><use href="#issue"/></svg></button>
        <button class="icon-btn" aria-label="Pull requests"><svg class="icon"><use href="#pull"/></svg></button>
        <button class="icon-btn" aria-label="Notifications"><svg class="icon"><use href="#inbox"/></svg></button>
        <button class="plain" aria-label="User menu"><svg class="avatar large"><use href="#identicon"/></svg></button>
      </div>
      <nav class="repo-nav" aria-label="Repository">
        <a class="current" href="#"><svg class="icon"><use href="#code"/></svg>Code</a>
        <a href="#"><svg class="icon"><use href="#pull"/></svg>Pull requests</a>
        <a href="#"><svg class="icon"><use href="#play"/></svg>Actions</a>
        <a href="#"><svg class="icon"><use href="#table"/></svg>Projects</a>
        <a href="#"><svg class="icon"><use href="#book"/></svg>Wiki</a>
        <a href="#"><svg class="icon"><use href="#shield"/></svg>Security</a>
        <a href="#"><svg class="icon"><use href="#graph"/></svg>Insights</a>
        <a href="#"><svg class="icon"><use href="#gear"/></svg>Settings</a>
      </nav>
    </header>

    <main class="container">
      <div class="repo-head">
        <div>
          <div class="repo-title"><svg class="avatar medium"><use href="#identicon"/></svg><h1>kriptografi-202501-230320555</h1><span class="badge">Public</span></div>
          <div class="forked">forked from <a class="link" href="#">mhbahara/kriptografi-202501</a></div>
        </div>
        <div class="repo-actions">
          <button class="btn small pin"><svg class="icon"><use href="#pin"/></svg>Pin</button>
          <button class="btn small watch"><svg class="icon"><use href="#eye"/></svg>Watch<span class="count">0</span><svg class="icon"><use href="#caret"/></svg></button>
          <div class="split">
            <button class="btn small main-part" disabled><svg class="icon"><use href="#fork"/></svg>Fork<span class="count">0</span></button>
            <button class="btn small drop" aria-label="Fork menu"><svg class="icon"><use href="#caret"/></svg></button>
          </div>
          <div class="split">
            <button class="btn small main-part"><svg class="icon"><use href="#star"/></svg>Star<span class="count">0</span></button>
            <button class="btn small drop" aria-label="Star menu"><svg class="icon"><use href="#caret"/></svg></button>
          </div>
        </div>
      </div>

      <div class="columns">
        <div class="primary">
          <div class="file-bar">
            <button class="btn"><svg class="icon"><use href="#branch"/></svg>main<svg class="icon"><use href="#caret"/></svg></button>
            <a class="stat" href="#"><svg class="icon"><use href="#branch"/></svg><span><b>1</b> Branch</span></a>
            <a class="stat" href="#"><svg class="icon"><use href="#tag"/></svg><span><b>0</b> Tags</span></a>
            <label class="find"><svg class="icon"><use href="#search"/></svg><input type="text" placeholder="Go to file" aria-label="Go to file"><kbd>t</kbd></label>
            <button class="btn">Add file<svg class="icon"><use href="#caret"/></svg></button>
            <button class="btn green"><svg class="icon"><use href="#code"/></svg>Code<svg class="icon"><use href="#caret"/></svg></button>
          </div>

          <div class="box compare">
            <p>This branch is <a href="#">2 commits ahead of</a> <span class="ref">mhbahara/kriptografi-202501:main</span>.</p>
            <button class="btn"><svg class="icon"><use href="#pull"/></svg>Contribute<svg class="icon"><use href="#caret"/></svg></button>
            <button class="btn"><svg class="icon"><use href="#sync"/></svg>Sync fork<svg class="icon"><use href="#caret"/></svg></button>
          </div>

          <div class="box files">
            <div class="latest">
              <svg class="avatar small-av"><use href="#identicon"/></svg>
              <a class="strong" href="#">noviwardani</a>
              <a class="message" href="#">Add files via upload</a>
              <span class="sha">e71006f · 1 minute ago</span>
              <a class="commits" href="#"><svg class="icon"><use href="#history"/></svg>10 Commits</a>
            </div>
            <table>
              <colgroup><col class="col-name"><col><col class="col-date"></colgroup>
              <tbody>
                <tr><td><a href="#"><svg class="icon dir"><use href="#folder"/></svg>docs</a></td><td>Update 02_cryptosystem.md</td><td>yesterday</td></tr>
                <tr><td><a href="#"><svg class="icon dir"><use href="#folder"/></svg>praktikum</a></td><td>Add files via upload</td><td>1 minute ago</td></tr>
                <tr><td><a href="#"><svg class="icon"><use href="#file"/></svg>.gitignore</a></td><td>Initial commit</td><td>last week</td></tr>
                <tr><td><a href="#"><svg class="icon"><use href="#file"/></svg>LICENSE</a></td><td>Initial commit</td><td>last week</td></tr>
                <tr><td><a href="#"><svg class="icon"><use href="#file"/></svg>README.md</a></td><td>Update README.md for clarity and consistency in practical instructions</td><td>4 days ago</td></tr>
                <tr><td><a href="#"><svg class="icon"><use href="#file"/></svg>tmp_test.md</a></td><td>Add initial documentation and practical guides for Cryptography course</td><td>last week</td></tr>
              </tbody>
            </table>
          </div>

          <div class="box readme">
            <div class="readme-bar">
              <a class="current" href="#"><svg class="icon"><use href="#book"/></svg>README</a>
              <a href="#"><svg class="icon"><use href="#law"/></svg>License</a>
              <div class="readme-tools">
                <button class="plain" aria-label="Edit file"><svg class="icon"><use href="#pencil"/></svg></button>
                <button class="plain" aria-label="Outline"><svg class="icon"><use href="#list"/></svg></button>
              </div>
            </div>
            <article class="markdown">
              <h2>Praktikum Kriptografi – TinyCoin (20251)</h2>
              <p>Repositori ini merupakan <b>template praktikum</b> untuk mata kuliah <em>Kriptografi</em> semester Gasal 2025/2026, dengan studi kasus <b>TinyCoin</b> – mulai dari <b>CIA Triad</b>, cipher klasik, kriptografi modern, tanda tangan digital, hingga implementasi cryptocurrency sederhana berbasis <b>TinyChain</b> (blockchain PoW) dan token ERC-20 (<b>TinyCoin</b>).</p>
              <p>Mahasiswa diharapkan membangun pemahaman menyeluruh tentang kriptografi, dimulai dari konsep dasar hingga aplikasinya dalam bentuk prototipe blockchain dan smart contract.</p>
            </article>
          </div>
        </div>

        <aside class="sidebar">
          <section>
            <div class="about-head"><h2>About</h2><button class="plain" aria-label="Edit repository details"><svg class="icon"><use href="#gear"/></svg></button></div>
            <p class="about">Praktikum Kriptografi 2025/2026 – TinyCoin (OOP → Blockchain → Web3)</p>
            <ul>
              <li><a href="#"><svg class="icon"><use href="#book"/></svg>Readme</a></li>
              <li><a href="#"><svg class="icon"><use href="#law"/></svg>MIT license</a></li>
              <li><a href="#"><svg class="icon"><use href="#pulse"/></svg>Activity</a></li>
              <li><a href="#"><svg class="icon"><use href="#star"/></svg><span><b>0</b> stars</span></a></li>
              <li><a href="#"><svg class="icon"><use href="#eye"/></svg><span><b>0</b> watching</span></a></li>
              <li><a href="#"><svg class="icon"><use href="#fork"/></svg><span><b>0</b> forks</span></a></li>
            </ul>
          </section>
          <section>
            <h2>Releases</h2>
            <p class="note">No releases published<br><a class="link" href="#">Create a new release</a></p>
          </section>
          <section>
            <h2>Packages</h2>
            <p class="note">No packages published<br><a class="link" href="#">Publish your first package</a></p>
          </section>
        </aside>
      </div>
    </main>
  </div>
  <div class="scrollbar" aria-hidden="true">
    <svg width="12" height="10" viewBox="0 0 12 10" fill="#8b8b8b"><path d="M6 0c.5 0 .8.300 1 .600L11.800 8.500c.4.7 0 1.500-.8 1.500H1C.200 10-.2 9.200.2 8.500L5 .600C5.200.300 5.500 0 6 0Z"/></svg>
    <span class="thumb"></span>
    <svg width="12" height="10" viewBox="0 0 12 10" fill="#8b8b8b"><path d="M6 10c.5 0 .8-.3 1-.6l4.800-7.900c.4-.7 0-1.500-.8-1.500H1C.200 0-.2.800.2 1.500L5 9.400c.2.300.5.600 1 .6Z"/></svg>
  </div>
</div>
</body>
</html>
```
FILE: styles.css
```css
:root {
  --fg: #1f2328;
  --muted: #59636e;
  --border: #d1d9e0;
  --border-muted: #dfe4e9;
  --soft: #f6f8fa;
  --blue: #0969da;
  --accent: #fd8c73;
}

* { box-sizing: border-box; }

body {
  margin: 0;
  height: 100vh;
  display: flex;
  flex-direction: column;
  overflow: hidden;
  background: #fff;
  color: var(--fg);
  font: 13px/20px "Open Sans", "Noto Sans", sans-serif;
}

h1, h2, p, ul { margin: 0; padding: 0; }
ul { list-style: none; }
a { color: inherit; text-decoration: none; }
b, .strong { font-weight: 600; }
button, input { font: inherit; color: inherit; margin: 0; }
button { cursor: pointer; }
svg { display: block; flex: none; }
.sprite { display: none; }

.icon { width: 16px; height: 16px; fill: var(--muted); }
.ink { fill: var(--fg); }

.plain {
  display: flex;
  align-items: center;
  justify-content: center;
  padding: 0;
  border: 0;
  background: none;
}

.link {
  color: var(--blue);
  text-decoration: underline;
  text-underline-offset: 3px;
}

.avatar { border: 1px solid #d5d9dd; border-radius: 50%; }
.avatar.large { width: 34px; height: 34px; }
.avatar.medium { width: 26px; height: 26px; }
.avatar.small-av { width: 22px; height: 22px; }

/* Browser frame */
.browser { flex: none; background: #d3e2fd; color: #474747; }

.tabstrip {
  display: flex;
  height: 50px;
  padding: 8px 20px 0 8px;
}

.tab-search {
  display: flex;
  align-items: center;
  justify-content: center;
  width: 35px;
  height: 34px;
  padding: 0;
  border: 0;
  border-radius: 11px;
  background: #ebf1fe;
}

.tab {
  position: relative;
  display: flex;
  align-items: center;
  width: 291px;
  height: 42px;
  padding: 0 12px 8px 10px;
  gap: 10px;
  font-size: 14px;
}

.tab:not(.active) { margin-left: 7px; margin-right: 6px; }

.tab-title {
  flex: 1;
  overflow: hidden;
  white-space: nowrap;
}

.active { background: #fff; border-radius: 12px 12px 0 0; color: #1f1f1f; }

.active .tab-title {
  -webkit-mask-image: linear-gradient(90deg, #000 85%, transparent);
  mask-image: linear-gradient(90deg, #000 85%, transparent);
}

.active::before,
.active::after {
  content: "";
  position: absolute;
  bottom: 0;
  width: 14px;
  height: 14px;
}

.active::before { right: 100%; background: radial-gradient(circle at 0 0, transparent 13px, #fff 14px); }
.active::after { left: 100%; background: radial-gradient(circle at 100% 0, transparent 13px, #fff 14px); }

.new-tab { margin-left: 13px; width: 24px; height: 34px; }

.window-controls {
  display: flex;
  gap: 43px;
  height: 34px;
  margin-left: auto;
  padding-right: 2px;
}

.toolbar {
  display: flex;
  align-items: center;
  height: 59px;
  padding: 0 18px;
  border-bottom: 2px solid #dedfdd;
  border-radius: 12px 12px 0 0;
  background: #fff;
}

.nav-buttons { display: flex; gap: 29px; padding: 0 25px 0 1px; }

.omnibox {
  flex: 1;
  display: flex;
  align-items: center;
  gap: 20px;
  height: 42px;
  padding: 0 20px 0 6px;
  border-radius: 21px;
  background: #e0e5ec;
}

.site-info {
  display: flex;
  align-items: center;
  justify-content: center;
  width: 30px;
  height: 30px;
  padding: 0;
  border: 0;
  border-radius: 50%;
  background: #fff;
}

.url {
  flex: 1;
  min-width: 0;
  margin-left: -10px;
  padding: 0;
  border: 0;
  outline: 0;
  background: none;
  color: #3c3f43;
  font-size: 17px;
  line-height: 24px;
}

.toolbar-end { display: flex; align-items: center; padding-left: 23px; }

.toolbar-rule {
  width: 2px;
  height: 20px;
  margin: 0 21px 0 20px;
  background: #d3e2fd;
}

.profile {
  width: 25px;
  height: 25px;
  margin-right: 24px;
  padding: 0;
  border: 0;
  border-radius: 50%;
  background: #004d40;
  color: #fff;
  font-size: 11px;
  font-weight: 600;
  line-height: 25px;
}

/* Page */
.viewport { flex: 1; min-height: 0; display: flex; }
.page { flex: 1; min-width: 0; overflow: hidden; }

.scrollbar {
  display: flex;
  flex-direction: column;
  align-items: center;
  width: 19px;
  padding: 7px 0 3px;
  background: #fcfcfc;
}

.thumb {
  width: 11px;
  height: 24%;
  margin: 7px 0 auto;
  border-radius: 6px;
  background: #8b8b8b;
}

.app-header { background: var(--soft); border-bottom: 1px solid var(--border); }

.app-bar {
  display: flex;
  align-items: center;
  gap: 8px;
  padding: 15px 16px 13px;
}

.icon-btn {
  display: flex;
  align-items: center;
  justify-content: center;
  width: 32px;
  height: 32px;
  padding: 0;
  border: 1px solid var(--border);
  border-radius: 6px;
  background: none;
}

.icon-btn.narrow { width: 24px; }
.icon-btn.create { width: 50px; gap: 4px; }

.split { display: flex; }
.split > :first-child { border-radius: 6px 0 0 6px; border-right: 0; }
.split > :last-child { border-radius: 0 6px 6px 0; }

.home { margin: 0 2px 0 5px; }

.crumbs { display: flex; gap: 10px; padding-left: 5px; }
.crumbs span { color: var(--muted); padding: 0 2px; }

.global-search {
  display: flex;
  align-items: center;
  gap: 8px;
  width: 260px;
  height: 32px;
  margin-left: auto;
  padding: 0 7px;
  border: 1px solid var(--border);
  border-radius: 6px;
  background: none;
  color: var(--muted);
}

.global-search kbd {
  display: inline-block;
  width: 16px;
  border: 1px solid var(--muted);
  border-radius: 3px;
  font: inherit;
  font-size: 12px;
  line-height: 14px;
  text-align: center;
}

.bar-rule { width: 1px; height: 20px; margin: 0 4px; background: var(--border); }

.repo-nav { display: flex; gap: 10px; padding: 0 16px; }

.repo-nav a {
  display: flex;
  align-items: center;
  gap: 8px;
  height: 41px;
  padding: 0 8px 6px;
}

.repo-nav .current {
  padding-bottom: 4px;
  border-bottom: 2px solid var(--accent);
  font-weight: 600;
}

.container { max-width: 1280px; margin: 0 auto; padding: 16px 32px 0; }

.repo-head {
  display: flex;
  justify-content: space-between;
  padding-bottom: 15px;
  border-bottom: 1px solid var(--border);
}

.repo-title { display: flex; align-items: center; gap: 7px; }
.repo-title h1 { font-size: 19px; font-weight: 600; line-height: 32px; }

.badge {
  padding: 0 7px;
  border: 1px solid var(--border);
  border-radius: 10px;
  color: var(--muted);
  font-size: 11px;
  line-height: 18px;
}

.forked { font-size: 11px; line-height: 20px; }

.repo-actions { display: flex; align-items: flex-start; gap: 8px; }

.btn {
  display: flex;
  align-items: center;
  gap: 8px;
  height: 32px;
  padding: 0 12px;
  border: 1px solid var(--border);
  border-radius: 6px;
  background: var(--soft);
  font-weight: 600;
  white-space: nowrap;
}

.btn.small { height: 28px; font-size: 11px; }
.btn:disabled { color: #818b98; background: #eff2f5; }
.btn:disabled .icon { fill: #818b98; }
.btn.green { background: #1f883d; border-color: #1f883d; color: #fff; }
.btn.green .icon { fill: #fff; }
.btn.small.watch { gap: 4px; padding: 0 5px 0 8px; }
.btn.small.watch .count { margin-left: 5px; }
.btn.small.main-part { padding: 0 12px 0 13px; }
.btn.small.main-part .count { margin-left: -2px; }
.btn.small.drop { width: 34px; padding: 0 8px; }

.count {
  min-width: 20px;
  border-radius: 10px;
  background: #e6eaee;
  line-height: 20px;
  text-align: center;
}

.columns { display: flex; gap: 24px; padding-top: 24px; }
.primary { flex: 1; min-width: 0; }
.sidebar { width: 296px; flex: none; }

.file-bar { display: flex; align-items: center; gap: 8px; padding-bottom: 16px; }

.stat { display: flex; align-items: center; gap: 7px; color: var(--muted); }
.stat b { color: var(--fg); }
.btn + .stat { margin-left: 5px; }
.stat + .stat { margin-left: 2px; }

.find {
  display: flex;
  align-items: center;
  gap: 8px;
  width: 226px;
  height: 32px;
  margin-left: auto;
  padding: 0 8px;
  border: 1px solid var(--border);
  border-radius: 6px;
}

.find input {
  flex: 1;
  min-width: 0;
  padding: 0;
  border: 0;
  outline: 0;
  background: none;
}

.find input::placeholder { color: var(--muted); opacity: 1; }

.find kbd {
  width: 16px;
  border: 1px solid var(--border);
  border-bottom-width: 2px;
  border-radius: 5px;
  background: var(--soft);
  font: 11px/16px "Liberation Mono", monospace;
  text-align: center;
}

.box {
  margin-bottom: 16px;
  border: 1px solid var(--border);
  border-radius: 6px;
}

.compare {
  display: flex;
  align-items: center;
  gap: 8px;
  padding: 8px;
  background: var(--soft);
}

.compare p { flex: 1; padding-left: 8px; }
.compare p a { color: var(--blue); }
.compare .btn { padding-right: 10px; }

.ref {
  display: inline-block;
  padding: 0 6px;
  border-radius: 6px;
  background: #ddf4ff;
  color: var(--muted);
  font: 11px/22px "Liberation Mono", monospace;
}

.files { overflow: hidden; }

.latest {
  display: flex;
  align-items: center;
  gap: 8px;
  height: 53px;
  padding: 0 20px 0 12px;
  border-bottom: 1px solid var(--border);
  background: var(--soft);
}

.message { color: var(--muted); }
.sha { margin-left: auto; color: var(--muted); font-size: 11px; }

.commits {
  display: flex;
  align-items: center;
  gap: 4px;
  padding-left: 8px;
  font-size: 11px;
  font-weight: 600;
}

.files table { width: 100%; table-layout: fixed; border-collapse: collapse; }
.col-name { width: 40%; }
.col-date { width: 136px; }
.files tr + tr { border-top: 1px solid var(--border); }

.files td {
  height: 41px;
  padding: 0 12px 0 16px;
  color: var(--muted);
  overflow: hidden;
  text-overflow: ellipsis;
  white-space: nowrap;
}

.files td:last-child { padding-right: 16px; text-align: right; }
.files td a { display: flex; align-items: center; gap: 10px; color: var(--fg); }
.icon.dir { fill: #54aeff; }

.readme-bar {
  display: flex;
  gap: 10px;
  height: 48px;
  padding: 0 8px;
  border-bottom: 1px solid var(--border);
}

.readme-bar > a { display: flex; align-items: center; gap: 8px; padding: 0 8px; }
.readme-bar .current { border-bottom: 2px solid var(--accent); padding-top: 2px; font-weight: 600; }
.readme-tools { display: flex; gap: 23px; margin-left: auto; padding-right: 9px; }

.markdown { padding: 32px; font-size: 15px; line-height: 24px; }

.markdown h2 {
  margin-bottom: 16px;
  padding-bottom: 9px;
  border-bottom: 1px solid var(--border-muted);
  font-size: 30px;
  font-weight: 600;
  line-height: 40px;
}

.markdown p { margin-bottom: 16px; }

.sidebar section { padding-bottom: 16px; margin-bottom: 16px; border-bottom: 1px solid var(--border-muted); }
.sidebar section:last-child { border-bottom: 0; }
.sidebar h2 { font-size: 15px; font-weight: 600; line-height: 24px; }
.about-head { display: flex; align-items: center; justify-content: space-between; padding: 4px 0 2px; }
.about { margin: 14px 0 16px; font-size: 15px; line-height: 24px; }
.sidebar li { height: 29px; color: var(--muted); line-height: 21px; }
.sidebar li:last-child { height: 21px; }
.sidebar li a { display: flex; align-items: center; gap: 12px; }
.note { margin-top: 17px; color: var(--muted); font-size: 11px; line-height: 18px; }
```
